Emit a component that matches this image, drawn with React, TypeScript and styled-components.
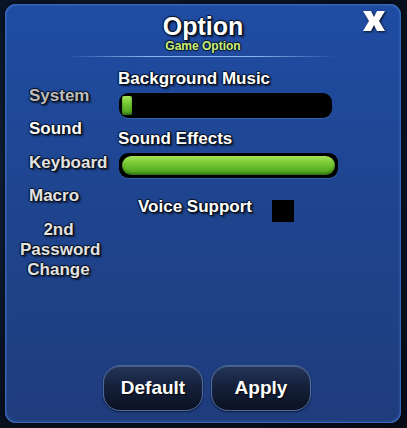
import React from 'react'
import styled, { createGlobalStyle } from 'styled-components'

const GlobalStyle = createGlobalStyle`
  html, body {
    margin: 0;
    padding: 0;
    width: 407px;
    height: 428px;
    overflow: hidden;
    background: radial-gradient(ellipse at 30% 40%, #14243f 0%, #0a1427 55%, #060b16 100%);
    font-family: 'Liberation Sans', Arial, sans-serif;
  }
`

const outline = `
  -1px 0 1px #08101e, 1px 0 1px #08101e, 0 -1px 1px #08101e, 0 1px 1px #08101e,
  2px 2px 2px rgba(0, 0, 0, 0.7)
`

const Backdrop = styled.div`
  width: 407px;
  height: 428px;
  padding: 4px 6px 5px 5px;
  box-sizing: border-box;
`

const Panel = styled.div`
  position: relative;
  height: 100%;
  display: flex;
  flex-direction: column;
  border-radius: 11px;
  background: linear-gradient(180deg, #1f4ca3 0%, #1f4590 45%, #1f3c7c 100%);
  box-shadow: inset 0 0 0 1px #3667b8, inset 0 0 3px 1px rgba(90, 140, 220, 0.45),
    0 0 4px rgba(0, 0, 0, 0.8);
`

const Header = styled.div`
  display: flex;
  flex-direction: column;
  align-items: center;
  padding-top: 9px;
`

const Title = styled.div`
  font-size: 25px;
  line-height: 26px;
  font-weight: bold;
  color: #fff;
  text-shadow: ${outline};
`

const Subtitle = styled.div`
  margin-top: 1px;
  font-size: 12px;
  line-height: 12px;
  font-weight: bold;
  color: #c9f07a;
  text-shadow: -1px 0 1px #0b1426, 1px 0 1px #0b1426, 0 1px 1px #0b1426, 0 -1px 1px #0b1426;
`

const Divider = styled.div`
  margin-top: 4px;
  margin-right: 4px;
  width: 270px;
  height: 1px;
  background: linear-gradient(90deg, rgba(120, 170, 240, 0), #8fb4ee 30%, #8fb4ee 70%, rgba(120, 170, 240, 0));
`

const Close = styled.button`
  position: absolute;
  top: 6px;
  right: 16px;
  width: 22px;
  height: 22px;
  padding: 0;
  border: 0;
  background: none;
  cursor: pointer;
  filter: drop-shadow(1px 1px 1px rgba(0, 0, 0, 0.8));
`

const Body = styled.div`
  display: grid;
  grid-template-columns: 113px 1fr;
`

const Menu = styled.div`
  display: flex;
  flex-direction: column;
  gap: 13.5px;
  padding: 28.5px 0 0 24px;
`

const MenuItem = styled.div<{ $active?: boolean; $dim?: boolean; $multi?: boolean }>`
  font-size: 17px;
  line-height: 20px;
  font-weight: bold;
  color: ${p => (p.$active ? '#ffffff' : p.$dim ? '#bdbdbd' : '#e2e2e2')};
  text-shadow: ${outline};
  ${p => p.$multi && 'width: 77px; margin-left: -9px; text-align: center;'}
`

const Settings = styled.div`
  display: flex;
  flex-direction: column;
  padding-top: 12px;
  padding-right: 62px;
`

const Label = styled.div<{ $gap?: number }>`
  margin-top: ${p => p.$gap ?? 0}px;
  font-size: 17px;
  line-height: 20px;
  font-weight: bold;
  color: #fff;
  text-shadow: ${outline};
`

const Track = styled.div<{ $w: number }>`
  margin-top: 4px;
  margin-left: 1px;
  width: ${p => p.$w}px;
  height: 25px;
  box-sizing: border-box;
  padding: 3px;
  border-radius: 9px;
  background: #000;
  box-shadow: 0 1px 0 rgba(80, 120, 190, 0.5);
`

const Fill = styled.div<{ $round?: boolean }>`
  height: 100%;
  border-radius: ${p => (p.$round ? '10px' : '2px')};
  background: linear-gradient(180deg, #a6e35a 0%, #7fcf3a 30%, #5db226 70%, #4a9a1c 100%);
  box-shadow: inset 0 -2px 2px rgba(30, 80, 10, 0.5);
`

const VoiceRow = styled.div`
  display: flex;
  align-items: flex-start;
  gap: 20px;
  margin-top: 19px;
  padding-left: 20px;
`

const Check = styled.div`
  margin-top: 3px;
  width: 22px;
  height: 22px;
  background: #000;
`

const Footer = styled.div`
  margin-top: auto;
  display: flex;
  justify-content: center;
  gap: 8px;
  padding: 0 0 12px 8px;
`

const Button = styled.button`
  width: 100px;
  height: 46px;
  border-radius: 17px;
  border: 1px solid #4e6a9c;
  background: linear-gradient(180deg, #23355a 0%, #141f38 50%, #0b1122 100%);
  box-shadow: inset 0 1px 1px rgba(140, 170, 220, 0.35), 0 1px 2px rgba(0, 0, 0, 0.6);
  font-family: 'Liberation Sans', Arial, sans-serif;
  font-size: 19px;
  font-weight: bold;
  color: #fff;
  text-shadow: 1px 1px 1px rgba(0, 0, 0, 0.8);
  cursor: pointer;
`

const sfx = [
  { label: 'Background Music', value: 0.048, width: 213, gap: 0 },
  { label: 'Sound Effects', value: 1, width: 219, gap: 11 },
]

const App = () => {
  return (
    <>
      <GlobalStyle />
      <Backdrop>
        <Panel>
          <Header>
            <Title>Option</Title>
            <Subtitle>Game Option</Subtitle>
            <Divider />
          </Header>
          <Close aria-label="close">
            <svg width="22" height="22" viewBox="0 0 22 22">
              <polygon
                points="0,1 8,1 11,7 14,1 22,1 16,11 22,21 14,21 11,15 8,21 0,21 6,11"
                fill="#fff"
              />
            </svg>
          </Close>
          <Body>
            <Menu>
              <MenuItem $dim>System</MenuItem>
              <MenuItem $active>Sound</MenuItem>
              <MenuItem>Keyboard</MenuItem>
              <MenuItem>Macro</MenuItem>
              <MenuItem $multi>
                2nd
                <br />
                Password
                <br />
                Change
              </MenuItem>
            </Menu>
            <Settings>
              {sfx.map(s => (
                <React.Fragment key={s.label}>
                  <Label $gap={s.gap}>{s.label}</Label>
                  <Track $w={s.width}>
                    <Fill $round={s.value >= 1} style={{ width: `${s.value * 100}%` }} />
                  </Track>
                </React.Fragment>
              ))}
              <VoiceRow>
                <Label>Voice Support</Label>
                <Check />
              </VoiceRow>
            </Settings>
          </Body>
          <Footer>
            <Button>Default</Button>
            <Button>Apply</Button>
          </Footer>
        </Panel>
      </Backdrop>
    </>
  )
}

export default App
